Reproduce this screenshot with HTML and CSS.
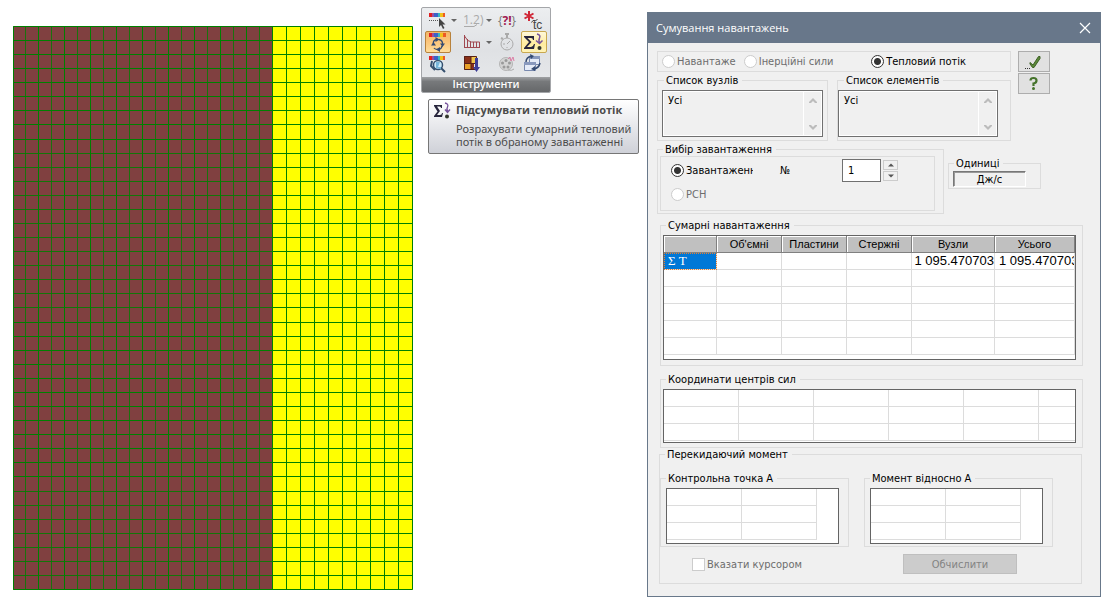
FILE: index.html
```html
<!DOCTYPE html>
<html lang="uk">
<head>
<meta charset="utf-8">
<title>Сумування навантажень</title>
<link rel="stylesheet" href="styles.css">
</head>
<body>
<main class="workspace">
  <svg class="mesh" viewBox="0 0 400 564" role="img" aria-label="Розрахункова схема">
    <path fill="#804040" d="M0 0h260v564H0z"/>
    <path fill="#ffff00" d="M260 0h140v564H260z"/>
    <g fill="none" stroke="#008000">
      <path stroke-opacity=".8" d="M12.5 0v564m26 0v-564m26 0v564m26 0v-564m26 0v564m26 0v-564m26 0v564m26 0v-564m26 0v564m26 0v-564"/>
      <path stroke-opacity=".85" d="M0 127.5h260m0 14H0m0 14h260m0 14H0m0 14h260m0 14H0m0 14h260m0 14H0m0 14h260m0 14H0m0 14h260m0 14H0M0 465.5h260m0 14H0m0 14h260m0 14H0m0 14h260m0 14H0m0 14h260"/>
      <path d="M25.5 0v564m26 0v-564m26 0v564m26 0v-564m26 0v564m26 0v-564m26 0v564m26 0v-564m26 0v564"/>
      <path d="M0 14.5h260m0 14H0m0 14h260m0 14H0m0 14h260m0 14H0m0 14h260m0 15H0M0 296.5h260m0 14H0m0 14h260m0 14H0m0 14h260m0 14H0m0 14h260m0 14H0m0 14h260m0 14H0m0 14h260m0 14H0"/>
      <path d="M260 14.5h140m0 14H260m0 14h140m0 14H260m0 14h140m0 14H260m0 14h140m0 15H260m0 14h140m0 14H260m0 14h140m0 14H260m0 14h140m0 14H260m0 14h140m0 14H260m0 14h140m0 14H260m0 14h140m0 14H260m0 15h140m0 14H260m0 14h140m0 14H260m0 14h140m0 14H260m0 14h140m0 14H260m0 14h140m0 14H260m0 14h140m0 14H260m0 15h140m0 14H260m0 14h140m0 14H260m0 14h140m0 14H260m0 14h140"/>
      <path d="M259.5 0v564m14 0v-564m14 0v564m14 0v-564m14 0v564m14 0v-564m14 0v564m14 0v-564m14 0v564m14 0v-564"/>
      <path d="M.5.5h399v563H.5z"/>
    </g>
  </svg>

  <div class="tools">
    <section class="ribbon" aria-label="Інструменти">
      <div class="ribbon-grid">
        <div class="split">
          <button class="tool" aria-label="Вибір на шкалі"><svg viewBox="0 0 26 22"><path fill="#e02020" d="M4 4h3v4H4z"/><path fill="#9b4fa0" d="M7 4h2v4H7z"/><path fill="#3a62c8" d="M9 4h4v4H9z"/><path fill="#35b8c0" d="M13 4h2v4h-2z"/><path fill="#f1c21b" d="M15 4h3v4h-3z"/><path fill="#ee5a24" d="M18 4h2v4h-2z"/><path stroke="#555" stroke-dasharray="1 1" d="M4 11.500h11"/><path fill="#444" d="M14 9v9l2-2 2 4 1.500-1-2-3.500h3z"/></svg></button>
          <span class="caret"></span>
        </div>
        <div class="split">
          <button class="tool muted" aria-label="Нумерація"><svg viewBox="0 0 26 22"><text class="ico-num" x="3" y="15">1.2)</text><path fill="none" stroke="#aaa" d="M4 17.500h10l3-2"/></svg></button>
          <span class="caret"></span>
        </div>
        <button class="tool" aria-label="Запит"><svg viewBox="0 0 26 22"><text class="ico-query" x="12" y="16" text-anchor="middle"><tspan fill="#777">{</tspan><tspan fill="#a01850" font-weight="bold">?!</tspan><tspan fill="#777">}</tspan></text></svg></button>
        <button class="tool" aria-label="Температура"><svg viewBox="0 0 26 22"><path stroke="#d02838" stroke-width="2" d="M8 2v10M3.500 4.500l9 5M3.500 9.500l9-5"/><path fill="none" stroke="#444" d="M10.500 13.500q1-3 4-2l2-1"/><text class="ico-temp" x="12" y="20">tc</text></svg></button>

        <button class="tool pressed" aria-label="Оновити шкалу"><svg viewBox="0 0 26 22"><path fill="#e02020" d="M4 2h3v4H4z"/><path fill="#9b4fa0" d="M7 2h2v4H7z"/><path fill="#3a62c8" d="M9 2h4v4H9z"/><path fill="#35b8c0" d="M13 2h2v4h-2z"/><path fill="#f1c21b" d="M15 2h3v4h-3z"/><path fill="#ee5a24" d="M18 2h3v4h-3z"/><path fill="none" stroke="#354b72" stroke-width="1.300" d="M8.500 14q-1-5 3-5.500M13 18.500q-3 0-4-1.500M14 8.500q4 1 3.500 5M17 15q-.5 3-3 3.500"/><path fill="#354b72" d="M10.500 6l4 2.500-4 2.500zM15 12.500h5L17.500 16zM6 14.500h5L8.500 11zM15 16v5l-4-2.500z"/></svg></button>
        <div class="split">
          <button class="tool" aria-label="Епюра"><svg viewBox="0 0 26 22"><path fill="none" stroke="#a04850" d="M4.500 4v13M7.500 8v9M10.500 11v6M13.500 11v6M16.500 11v6M19.500 11v6M4 16.500h16M4.500 5q3 6 7 6h8"/></svg></button>
          <span class="caret"></span>
        </div>
        <button class="tool muted" aria-label="Час"><svg viewBox="0 0 26 22"><g fill="none" stroke="#aaa"><circle cx="12" cy="13" r="6"/><path stroke-width="2" d="M10 3h4M12 3v4M6 7l2 1"/><path d="M12 13l3-3M8 13h2M12 17v-1"/></g></svg></button>
        <button class="tool hot" aria-label="Підсумувати тепловий потік"><svg viewBox="0 0 26 22"><path fill="#27253c" d="M3 5h10v4h-1q0-2-2-2H6.500l4 4-4.500 5H10q2 0 3-3h1l-1 5H3v-1l5-6L3 6z"/><path fill="none" stroke="#76529b" stroke-width="1.500" d="M16 3q4 1 2.500 4t1 5M15 9.500l3.500 3 3-3"/><circle cx="18.500" cy="17" r="2" fill="#33382b"/></svg></button>

        <button class="tool" aria-label="Збільшити"><svg viewBox="0 0 26 22"><path fill="#e02020" d="M4 3h3v4H4z"/><path fill="#9b4fa0" d="M7 3h2v4H7z"/><path fill="#3a62c8" d="M9 3h4v4H9z"/><path fill="#35b8c0" d="M13 3h2v4h-2z"/><path fill="#f1c21b" d="M15 3h3v4h-3z"/><path fill="#ee5a24" d="M18 3h2v4h-2z"/><circle cx="13" cy="12" r="4.500" fill="#cfeaf8" stroke="#35506e" stroke-width="1.500"/><path fill="none" stroke="#35506e" stroke-width="2" d="M16 15l4 4M7 8l-1 5 4 4"/><path fill="#76b6da" d="M11 9h4l-2 5h3v2l-5-1z"/></svg></button>
        <button class="tool" aria-label="Палітра"><svg viewBox="0 0 26 22"><path fill="#8a3018" d="M4 3h7v8H4z"/><path fill="#f0c44c" d="M11 3h6v8h-6z"/><path fill="#e8a028" d="M4 11h7v6H4z"/><path fill="#8a3018" d="M11 11h3v6h-3z"/><path fill="none" stroke="#572018" d="M4.500 3.500h12v13h-12zM11 3v14M4 10.500h12"/><path fill="#3d3d96" d="M15 5h3v9h2l-3.500 5L13 14h2z"/></svg></button>
        <button class="tool muted" aria-label="Анімація"><svg viewBox="0 0 26 22"><circle cx="11" cy="11" r="6.500" fill="#d4d4d4" stroke="#b4b4b4"/><g fill="#999"><circle cx="11" cy="7.500" r="1.500"/><circle cx="7.500" cy="10" r="1.500"/><circle cx="14.500" cy="10" r="1.500"/><circle cx="9" cy="14" r="1.500"/><circle cx="13" cy="14" r="1.500"/></g><path fill="none" stroke="#db7da4" d="M13 6l2-2 1 4 2-4 1 4"/><path fill="none" stroke="#aaa" d="M13 17q4 1 6-1"/></svg></button>
        <button class="tool" aria-label="Вікна"><svg viewBox="0 0 26 22"><path fill="#e5ebf7" stroke="#7889ae" d="M8.500 3.500h10v8h-10zM3.500 9.500h11v8h-11z"/><path fill="#8999bd" d="M8 3h11v3H8zM3 9h12v3H3z"/><path fill="none" stroke="#354b72" stroke-width="1.500" d="M5 9q0-5 6-6M19 10q-1 5-6 6"/><path fill="#354b72" d="M9 1l4 2-3 3zM14 13v5l-4-2z"/></svg></button>
      </div>
      <h2 class="ribbon-title">Інструменти</h2>
    </section>

    <aside class="tooltip" role="tooltip">
      <svg class="tooltip-icon" viewBox="0 0 18 18"><path fill="#27253c" d="M1 3h8v3H8Q8 4.500 6.500 4.500H4L7 9l-3 4h3q2 0 2-2h1l-1 4H1v-1l3.500-4.500L1 4z"/><path fill="none" stroke="#76529b" stroke-width="1.300" d="M12 1q4 1 2.500 4t.5 4.500M12 7.500l2.500 3 2.500-3"/><circle cx="14" cy="14.500" r="2" fill="#33382b"/></svg>
      <div class="tooltip-text">
        <strong>Підсумувати тепловий потік</strong>
        <p>Розрахувати сумарний тепловий<br>потік в обраному завантаженні</p>
      </div>
    </aside>
  </div>

  <section class="dialog" role="dialog" aria-labelledby="dlg-title">
    <header class="titlebar">
      <h1 id="dlg-title">Сумування навантажень</h1>
      <button class="close" aria-label="Закрити"><svg viewBox="0 0 12 12"><path stroke="#fff" stroke-width="1.200" d="M1 1l10 10M11 1L1 11"/></svg></button>
    </header>
    <form class="dialog-body">
      <div class="top">
        <div class="top-left">
          <div class="source">
            <label class="radio off"><input type="radio" name="source" disabled>Навантаже</label>
            <label class="radio off"><input type="radio" name="source" disabled>Інерційні сили</label>
            <label class="radio heat"><input type="radio" name="source" checked>Тепловий потік</label>
          </div>
          <div class="lists">
            <fieldset class="group list-nodes">
              <legend>Список вузлів</legend>
              <div class="listbox"><textarea aria-label="Список вузлів" readonly>Усі</textarea><span class="scroll"><svg viewBox="0 0 8 5"><path d="M0 4l4-4 4 4v1H6L4 3 2 5H0z"/></svg><svg viewBox="0 0 8 5"><path d="M0 1l4 4 4-4V0H6L4 2 2 0H0z"/></svg></span></div>
            </fieldset>
            <fieldset class="group list-elements">
              <legend>Список елементів</legend>
              <div class="listbox"><textarea aria-label="Список елементів" readonly>Усі</textarea><span class="scroll"><svg viewBox="0 0 8 5"><path d="M0 4l4-4 4 4v1H6L4 3 2 5H0z"/></svg><svg viewBox="0 0 8 5"><path d="M0 1l4 4 4-4V0H6L4 2 2 0H0z"/></svg></span></div>
            </fieldset>
          </div>
        </div>
        <div class="side">
          <button type="button" class="side-btn" aria-label="Застосувати"><svg viewBox="0 0 18 16"><path fill="#5c8a3a" stroke="#3b5f22" d="M5 8.500l3 2.500 5.500-8.500h1.500v2l-6 9H7.500L5 10z"/><path stroke="#333" stroke-dasharray="1 1" d="M0 14.500h6"/></svg></button>
          <button type="button" class="side-btn" aria-label="Довідка"><svg viewBox="0 0 18 16"><path fill="none" stroke="#45732b" stroke-width="2.200" d="M5.500 4.500Q5.500 2 8.500 2t3 2.500-3 3V10"/><circle cx="8.500" cy="12.500" r="1.500" fill="#45732b"/></svg></button>
        </div>
      </div>

      <div class="case-row">
        <fieldset class="group case">
          <legend>Вибір завантаження</legend>
          <div class="case-panel">
            <div class="case-line">
              <label class="radio case-name"><input type="radio" name="case" checked><span>Завантаження</span></label>
              <label class="case-no" for="case-no">№</label>
              <input class="case-input" id="case-no" type="text" value="1">
              <span class="spin"><button type="button" aria-label="Більше"><svg viewBox="0 0 6 4"><path d="M0 3.500l3-3 3 3z"/></svg></button><button type="button" aria-label="Менше"><svg viewBox="0 0 6 4"><path d="M0 .5l3 3 3-3z"/></svg></button></span>
            </div>
            <label class="radio off"><input type="radio" name="case" disabled>РСН</label>
          </div>
        </fieldset>
        <fieldset class="group units">
          <legend>Одиниці</legend>
          <output class="unit">Дж/с</output>
        </fieldset>
      </div>

      <fieldset class="group summary">
        <legend>Сумарні навантаження</legend>
        <div class="sheet">
          <table class="sums">
            <colgroup><col class="w53"><col class="w65"><col class="w65"><col class="w65"><col class="w83"><col></colgroup>
            <thead><tr><th></th><th>Об'ємні</th><th>Пластини</th><th>Стержні</th><th>Вузли</th><th>Усього</th></tr></thead>
            <tbody>
              <tr><td class="selected">Σ T</td><td></td><td></td><td></td><td class="num">1 095.470703</td><td class="num clip">1 095.470703</td></tr>
              <tr><td></td><td></td><td></td><td></td><td></td><td></td></tr>
              <tr><td></td><td></td><td></td><td></td><td></td><td></td></tr>
              <tr><td></td><td></td><td></td><td></td><td></td><td></td></tr>
              <tr><td></td><td></td><td></td><td></td><td></td><td></td></tr>
              <tr><td></td><td></td><td></td><td></td><td></td><td></td></tr>
            </tbody>
          </table>
        </div>
      </fieldset>

      <fieldset class="group centers">
        <legend>Координати центрів сил</legend>
        <div class="sheet">
          <table class="wide">
            <colgroup><col class="w75"><col class="w75"><col class="w75"><col class="w75"><col class="w75"><col></colgroup>
            <tbody>
              <tr><td></td><td></td><td></td><td></td><td></td><td></td></tr>
              <tr><td></td><td></td><td></td><td></td><td></td><td></td></tr>
              <tr><td></td><td></td><td></td><td></td><td></td><td></td></tr>
            </tbody>
          </table>
        </div>
      </fieldset>

      <fieldset class="group moment">
        <legend>Перекидаючий момент</legend>
        <div class="moment-cols">
          <fieldset class="group point">
            <legend>Контрольна точка А</legend>
            <div class="sheet"><table class="pair"><tbody><tr><td></td><td></td></tr><tr><td></td><td></td></tr><tr><td></td><td></td></tr></tbody></table></div>
          </fieldset>
          <fieldset class="group point">
            <legend>Момент відносно А</legend>
            <div class="sheet"><table class="pair"><tbody><tr><td></td><td></td></tr><tr><td></td><td></td></tr><tr><td></td><td></td></tr></tbody></table></div>
          </fieldset>
        </div>
        <div class="actions">
          <label class="check"><input type="checkbox" disabled>Вказати курсором</label>
          <button type="button" class="calc" disabled>Обчислити</button>
        </div>
      </fieldset>
    </form>
  </section>
</main>
</body>
</html>
```
FILE: styles.css
```css
* { box-sizing: border-box; }
body {
  margin: 0;
  background: #fff;
  color: #000;
  font: 11px/13px "DejaVu Sans Condensed", "Noto Sans", sans-serif;
}
h1, h2, p { margin: 0; }
button, input, textarea { font: inherit; color: inherit; margin: 0; padding: 0; }
svg { display: block; }

.workspace { display: flex; align-items: flex-start; gap: 8px; padding: 7px 0 12px 13px; }
.mesh { flex: none; width: 400px; margin-top: 19px; }

/* Ribbon and tooltip */
.tools { flex: none; width: 218px; display: flex; flex-direction: column; gap: 6px; }
.ribbon {
  align-self: flex-start;
  width: 130px;
  border: 1px solid #a4a6a9;
  border-radius: 2px;
  overflow: hidden;
  background: linear-gradient(#eceef0, #dfe1e4 50%, #e8eaec);
}
.ribbon-grid {
  display: grid;
  grid-template-columns: 35px 35px 26px 26px;
  grid-auto-rows: 22px;
  padding: 1px 3px 2px;
}
.split { display: flex; align-items: center; }
.tool { display: flex; align-items: center; justify-content: center; width: 26px; height: 22px; border: 1px solid transparent; border-radius: 2px; background: none; }
.tool svg { flex: none; width: 26px; height: 22px; }
.tool.pressed { border-color: #b8823c; background: linear-gradient(#f4b768, #fbc57c 50%, #ffdd9a); }
.tool.hot { border-color: #c8a850; background: linear-gradient(#fff8da, #ffec9e 60%, #fff3b8); }
.caret { border: 3px solid transparent; border-top-color: #666; border-bottom: 0; }
.ico-num { font: 12px "Open Sans", sans-serif; fill: #aaa; }
.ico-query { font: 12px "Open Sans", sans-serif; }
.ico-temp { font: 12px "Liberation Sans", sans-serif; fill: #444; }
.ribbon-title {
  height: 15px;
  background: linear-gradient(#a0a2a4, #77797b 30%, #66686a);
  color: #fff;
  font: 500 11px/14px "Noto Sans", sans-serif;
  text-align: center;
}
.tooltip {
  display: flex;
  gap: 5px;
  margin-left: 7px;
  padding: 2px 4px 5px 4px;
  border: 1px solid #767676;
  border-radius: 2px;
  background: linear-gradient(#fff, #cfd1d8);
  color: #4c4c4c;
  font: 11px/13px "Noto Sans", sans-serif;
  white-space: nowrap;
}
.tooltip-icon { flex: none; width: 18px; height: 18px; }
.tooltip strong { display: block; font: 700 11px/16px "Open Sans", sans-serif; margin-bottom: 4px; }

/* Dialog frame */
.dialog { flex: 1; min-width: 454px; margin-top: 5px; border: 1px solid #68788a; background: #f0f0f0; }
.titlebar {
  display: flex;
  align-items: center;
  justify-content: space-between;
  height: 30px;
  padding: 0 9px 0 8px;
  background: #68778a;
  color: #fff;
}
.titlebar h1 { font: 11px/16px "Open Sans", sans-serif; }
.close { width: 12px; height: 12px; border: 0; background: none; }
.dialog-body { padding: 8px 17px 12px 9px; }

.group { min-width: 0; margin: 0; padding: 3px 6px 5px 2px; border: 1px solid #dcdcdc; }
.group > legend { margin-left: 2px; padding: 0 4px 0 2px; line-height: 13px; white-space: nowrap; }

/* Radios and check boxes */
.radio, .check { display: flex; align-items: center; gap: 2px; white-space: nowrap; }
.radio input, .check input {
  appearance: none;
  flex: none;
  width: 13px;
  height: 13px;
  border: 1px solid #333;
  background: #fff;
}
.radio input { border-radius: 50%; }
.radio input:checked { background: radial-gradient(circle, #333 3px, #fff 4px); }
.radio input:disabled, .check input:disabled { border-color: #ccc; }
.off, .check { color: #6d6d6d; }

.top { display: flex; gap: 7px; }
.top-left { flex: none; width: 354px; }
.source { display: flex; gap: 8px; height: 21px; margin-bottom: 2px; padding: 0 4px; border: 1px solid #dcdcdc; }
.heat { margin-left: auto; margin-right: 40px; }
.lists { display: flex; gap: 9px; }
.list-nodes { flex: none; width: 171px; padding: 3px 4px 3px; }
.list-elements { flex: 1; padding: 3px 12px 3px 0; }
.list-nodes > legend { margin-left: 2px; }
.list-elements > legend { margin-left: 6px; }
.listbox { display: flex; height: 47px; border: 1px solid #707070; box-shadow: inset 0 0 0 1px #fff; }
.listbox textarea { flex: 1; min-width: 0; padding: 3px 5px; border: 0; background: none; resize: none; overflow: hidden; outline: 0; }
.scroll { display: flex; flex-direction: column; justify-content: space-between; padding: 7px 5px 6px; border-left: 1px solid #fff; }
.scroll svg { width: 8px; height: 5px; fill: #bcbcbc; }
.side { display: flex; flex-direction: column; gap: 1px; }
.side-btn { display: flex; align-items: center; justify-content: center; width: 32px; height: 21px; border: 1px solid #adadad; background: #e1e1e1; }
.side-btn svg { width: 18px; height: 16px; }

.case-row { display: flex; align-items: flex-start; gap: 4px; margin: 2px 0 5px; }
.case { width: 287px; padding: 0 8px 2px 2px; }
.case > legend { margin-left: 3px; }
.case-panel { height: 55px; padding: 1px 0 0 10px; border: 1px solid #dcdcdc; }
.case-line { display: flex; align-items: center; height: 25px; margin-bottom: 5px; }
.case-name { width: 82px; }
.case-name span { overflow: hidden; }
.case-no { width: 62px; margin-left: 27px; }
.case-input { width: 39px; height: 23px; padding: 0 5px; border: 1px solid #707070; background: #fff; }
.spin { display: flex; flex-direction: column; gap: 1px; margin-left: 2px; }
.spin button { display: flex; align-items: center; justify-content: center; width: 15px; height: 10px; border: 1px solid #ccc; background: #f0f0f0; }
.spin svg { width: 6px; height: 4px; fill: #555; }
.units { width: 93px; margin-top: 14px; padding: 1px 14px 1px 4px; }
.units > legend { margin-left: 1px; }
.unit { display: block; height: 16px; line-height: 15px; text-align: center; border: 1px solid; border-color: #777 #fff #fff #777; box-shadow: inset 1px 1px #999; }

/* Sheets */
.summary, .centers { margin-left: 3px; }
.summary > legend, .centers > legend { margin-left: 3px; }
.summary { margin-bottom: 7px; }
.centers { padding-bottom: 4px; }
.sheet { border: 1px solid #646464; background: #fff; overflow: hidden; }
.summary .sheet { height: 125px; }
.centers .sheet { height: 54px; }
.point .sheet { height: 56px; }
table { border-collapse: separate; border-spacing: 0; table-layout: fixed; width: 100%; }
td, th { height: 17px; padding: 0; border: 0 solid #dcdcdc; border-width: 0 1px 1px 0; overflow: hidden; white-space: nowrap; }
th { background: #c0c0c0; border-color: #808080; box-shadow: inset 1px 1px #fff; font: 11px/16px "Liberation Sans", Arial, sans-serif; }
.w53 { width: 53px; }
.w65 { width: 65px; }
.w75 { width: 75px; }
.w83 { width: 83px; }
.pair { width: 150px; }
.wide td:last-child { border-right: 0; }
.selected { padding-left: 4px; background: #0078d7; color: #fff; outline: 1px dotted #e88030; outline-offset: -1px; font: 13px/16px "Liberation Serif", serif; }
.num { font: 13px/16px "Liberation Sans", Arial, sans-serif; text-align: right; }
.num.clip { text-align: left; padding-left: 4px; }

.moment { margin: 0 1px 0 2px; padding: 11px 0 9px; }
.moment > legend { margin-left: 5px; }
.moment-cols { display: flex; gap: 15px; margin-bottom: 7px; }
.point { width: 189px; padding: 3px 9px 2px 5px; }
.point > legend { margin-left: 0; }
.actions { display: flex; align-items: center; padding-left: 32px; }
.check { width: 211px; }
.calc { width: 114px; height: 20px; border: 1px solid #bfbfbf; background: #ccc; color: #838383; }
```
